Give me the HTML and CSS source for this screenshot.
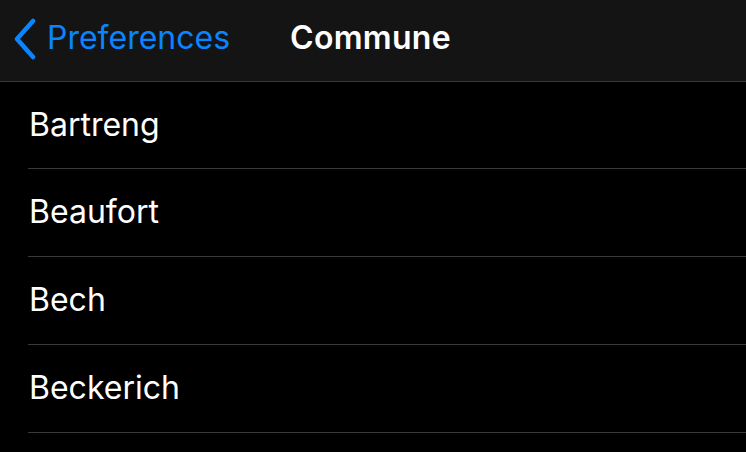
FILE: index.html
```html
<!DOCTYPE html>
<html>

<head>
  <meta charset="UTF-8">
  <meta name="viewport" content="width=device-width, initial-scale=1.0">
  <title>Commune</title>
  <link rel="stylesheet" href="styles.css">
</head>

<body>
  <div class="navbar">
    <div class="back">
      <svg class="chevron" width="26" height="42" viewBox="0 0 26 42">
        <path d="M21 3 L5 21 L21 39" fill="none" stroke="#0a84ff" stroke-width="4.5" stroke-linecap="round" stroke-linejoin="round" />
      </svg>
      <span>Preferences</span>
    </div>
    <h1>Commune</h1>
  </div>
  <div class="list">
    <div class="row">Bartreng</div>
    <div class="row">Beaufort</div>
    <div class="row">Bech</div>
    <div class="row">Beckerich</div>
  </div>
</body>

</html>
```

FILE: styles.css
```css
* {
  padding: 0;
  margin: 0;
  box-sizing: border-box;
}

body {
  overflow: hidden;
  background: #000;
  font-family: Inter, "Liberation Sans", sans-serif;
  color: #fff;
}

.navbar {
  height: 82px;
  background: #141414;
  border-bottom: 1px solid #3a3a3a;
  display: flex;
  align-items: center;
  padding-left: 12px;
  padding-bottom: 6px;
}

.back {
  display: flex;
  align-items: center;
  color: #0a84ff;
  font-size: 32px;
  width: 278px;
}

.chevron {
  margin-right: 9px;
  margin-top: 2px;
}

.navbar>h1 {
  font-size: 32px;
  font-weight: 600;
  letter-spacing: 0.3px;
}

.list {
  padding-left: 28px;
}

.row {
  height: 88px;
  border-bottom: 1px solid #3a3a3a;
  display: flex;
  align-items: center;
  padding-left: 1px;
  padding-bottom: 2px;
  font-size: 32px;
}

.row:first-child {
  height: 87px;
}
```
